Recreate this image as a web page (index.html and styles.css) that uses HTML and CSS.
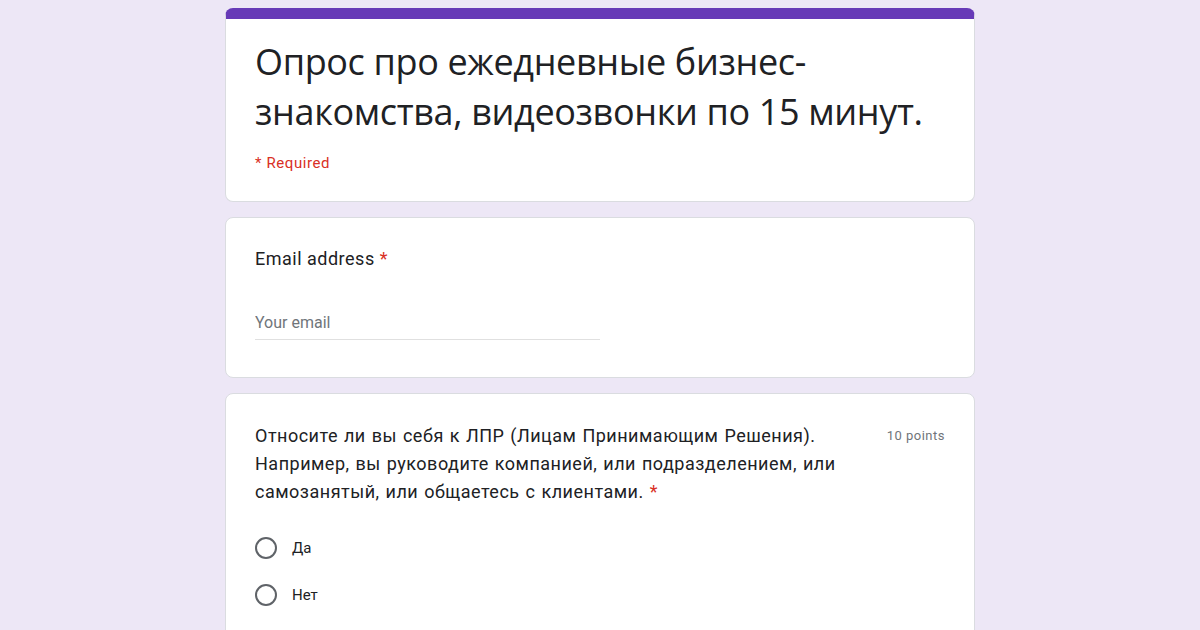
FILE: index.html
```html
<!DOCTYPE html>
<html lang="ru">
<head>
  <meta charset="UTF-8">
  <meta name="viewport" content="width=device-width, initial-scale=1.0">
  <title>Опрос про ежедневные бизнес-знакомства</title>
  <link rel="stylesheet" href="styles.css">
</head>
<body>
  <div class="form-wrap">
    <div class="form-card header-card">
      <h1 class="form-title">Опрос про ежедневные бизнес-знакомства, видеозвонки по 15 минут.</h1>
      <div class="required-note">* Required</div>
    </div>

    <div class="form-card">
      <div class="question-title">Email address <span class="star">*</span></div>
      <input class="text-input" type="email" placeholder="Your email">
    </div>

    <div class="form-card">
      <div class="question-head">
        <div class="question-text">Относите ли вы себя к ЛПР (Лицам Принимающим Решения). Например, вы руководите компанией, или подразделением, или самозанятый, или общаетесь с клиентами.&nbsp;<span class="star">*</span></div>
        <div class="points">10 points</div>
      </div>
      <label class="radio-option">
        <input type="radio" name="lpr" value="yes">
        <span class="radio-circle"></span>
        <span class="radio-label">Да</span>
      </label>
      <label class="radio-option">
        <input type="radio" name="lpr" value="no">
        <span class="radio-circle"></span>
        <span class="radio-label">Нет</span>
      </label>
    </div>
  </div>
</body>
</html>
```

FILE: styles.css
```css
/* Page */
body {
  margin: 0;
  background: #ede7f6;
  font-family: Roboto, 'Noto Sans', sans-serif;
  color: #202124;
}

.form-wrap {
  width: 750px;
  margin: 0 auto;
  padding-top: 8px;
  display: flex;
  flex-direction: column;
  gap: 15px;
}

/* Cards */
.form-card {
  background: #fff;
  border: 1px solid #dadce0;
  border-radius: 8px;
  padding: 23px 29px 37px;
}

.header-card {
  border-top: 11px solid #673ab7;
  padding: 18px 29px 29px;
}

.form-title {
  margin: 0;
  font-family: 'Open Sans', sans-serif;
  font-weight: 400;
  font-size: 36px;
  line-height: 50px;
  letter-spacing: -0.35px;
  color: #202124;
}

.required-note {
  margin-top: 17px;
  font-size: 15px;
  letter-spacing: 0.6px;
  color: #d93025;
}

/* Questions */
.question-title {
  font-size: 18px;
  line-height: 24px;
  letter-spacing: 0.5px;
  margin-top: 6px;
}

.star {
  color: #d93025;
}

.text-input {
  display: block;
  width: 345px;
  margin-top: 42px;
  padding: 0 0 7px;
  border: none;
  border-bottom: 1px solid #e0e0e0;
  font-family: Roboto, sans-serif;
  font-size: 16px;
  outline: none;
}

.text-input::placeholder {
  color: #70757a;
}

.question-head {
  display: flex;
  justify-content: space-between;
  gap: 40px;
  margin-top: 5px;
}

.question-text {
  font-size: 18px;
  line-height: 28px;
  letter-spacing: 0.5px;
  word-spacing: 1px;
  max-width: 600px;
}

.points {
  flex-shrink: 0;
  font-size: 13px;
  letter-spacing: 0.5px;
  color: #70757a;
  margin-top: 6px;
}

/* Radio options */
.radio-option {
  display: flex;
  align-items: center;
  gap: 15px;
  height: 47px;
  cursor: pointer;
}

.radio-option:first-of-type {
  margin-top: 18px;
}

.radio-option input {
  display: none;
}

.radio-circle {
  width: 18px;
  height: 18px;
  border: 2px solid #5f6368;
  border-radius: 50%;
}

.radio-option input:checked + .radio-circle {
  border-color: #673ab7;
  box-shadow: inset 0 0 0 4px #fff, inset 0 0 0 10px #673ab7;
}

.radio-label {
  font-size: 15px;
}
```
